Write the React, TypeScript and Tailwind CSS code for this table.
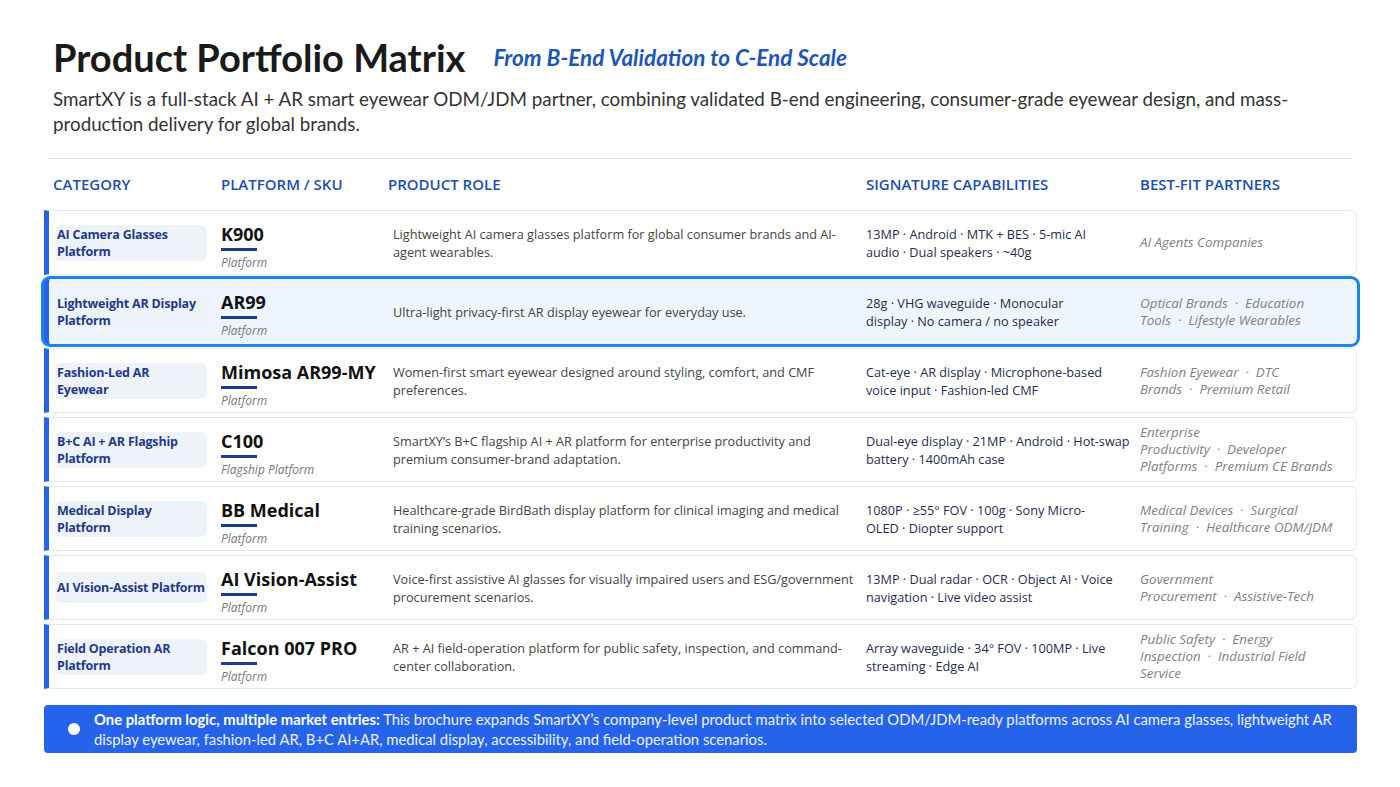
import React from "react";

type Row = {
  cat: string;
  sku: string;
  sub: string;
  role: string;
  caps: string;
  partners: string[];
  active?: boolean;
};

// category + capability cells carry their own line breaks (\n), as laid out in the deck
const ROWS: Row[] = [
  {
    cat: "AI Camera Glasses\nPlatform",
    sku: "K900",
    sub: "Platform",
    role: "Lightweight AI camera glasses platform for global consumer brands and AI-agent wearables.",
    caps: "13MP · Android · MTK + BES · 5-mic AI\naudio · Dual speakers · ~40g",
    partners: ["AI Agents Companies"],
  },
  {
    cat: "Lightweight AR Display\nPlatform",
    sku: "AR99",
    sub: "Platform",
    role: "Ultra-light privacy-first AR display eyewear for everyday use.",
    caps: "28g · VHG waveguide · Monocular\ndisplay · No camera / no speaker",
    partners: ["Optical Brands", "Education Tools", "Lifestyle Wearables"],
    active: true,
  },
  {
    cat: "Fashion-Led AR\nEyewear",
    sku: "Mimosa AR99-MY",
    sub: "Platform",
    role: "Women-first smart eyewear designed around styling, comfort, and CMF preferences.",
    caps: "Cat-eye · AR display · Microphone-based\nvoice input · Fashion-led CMF",
    partners: ["Fashion Eyewear", "DTC Brands", "Premium Retail"],
  },
  {
    cat: "B+C AI + AR Flagship\nPlatform",
    sku: "C100",
    sub: "Flagship Platform",
    role: "SmartXY\u2019s B+C flagship AI + AR platform for enterprise productivity and premium consumer-brand adaptation.",
    caps: "Dual-eye display · 21MP · Android · Hot-swap\nbattery · 1400mAh case",
    partners: ["Enterprise Productivity", "Developer Platforms", "Premium CE Brands"],
  },
  {
    cat: "Medical Display\nPlatform",
    sku: "BB Medical",
    sub: "Platform",
    role: "Healthcare-grade BirdBath display platform for clinical imaging and medical training scenarios.",
    caps: "1080P · \u226555\u00b0 FOV · 100g · Sony Micro-\nOLED · Diopter support",
    partners: ["Medical Devices", "Surgical Training", "Healthcare ODM/JDM"],
  },
  {
    cat: "AI Vision-Assist Platform",
    sku: "AI Vision-Assist",
    sub: "Platform",
    role: "Voice-first assistive AI glasses for visually impaired users and ESG/government procurement scenarios.",
    caps: "13MP · Dual radar · OCR · Object AI · Voice\nnavigation · Live video assist",
    partners: ["Government Procurement", "Assistive-Tech"],
  },
  {
    cat: "Field Operation AR\nPlatform",
    sku: "Falcon 007 PRO",
    sub: "Platform",
    role: "AR + AI field-operation platform for public safety, inspection, and command-center collaboration.",
    caps: "Array waveguide · 34\u00b0 FOV · 100MP · Live\nstreaming · Edge AI",
    partners: ["Public Safety", "Energy Inspection", "Industrial Field Service"],
  },
];

// column tracks for the rows (rows add a 5px bar + 6px pad on the left)
const COLS = "grid grid-cols-[166px_172px_473px_274px_1fr]";

function MatrixRow({ row }: { row: Row }) {
  return (
    <div
      className={`${COLS} h-[65px] items-center rounded-r-md border-l-[5px] border-l-[#2563eb] pl-[6px] ${
        row.active
          ? "bg-[#eef5fd] ring-[3px] ring-[#1a84e8] rounded-md"
          : "border-y border-r border-[#e6e9ef] bg-white"
      }`}
    >
      <div className="pr-[14px]">
        <div className="flex min-h-[31px] items-center whitespace-pre-line rounded-md bg-[#eef2f9] px-[2px] py-[1px] text-[12.5px] font-bold leading-[17px] tracking-[-0.2px] text-[#1e3a8a]">
          {row.cat}
        </div>
      </div>
      <div className="flex flex-col items-start self-start pt-[12px]">
        <div className="text-[18px] font-bold leading-[22px] text-[#111]">{row.sku}</div>
        <div className="mt-[3px] h-[3px] w-[36px] bg-[#1e3a8a]" />
        <div className="mt-[4px] text-[12px] italic leading-[16px] text-[#777]">{row.sub}</div>
      </div>
      <div className="pr-[8px] text-[12.7px] leading-[18px] text-[#444]">{row.role}</div>
      <div className="whitespace-pre-line text-[12.7px] leading-[18px] text-[#1f2d4f]">{row.caps}</div>
      <div className="pr-[14px] text-[13.4px] italic leading-[17px] text-[#808080]">
        {row.partners.join("\u00a0\u00a0\u00b7\u00a0\u00a0")}
      </div>
    </div>
  );
}

export default function App() {
  return (
    <div className="min-h-screen w-[1400px] bg-white pl-[44px] pr-[43px] pt-[32px] font-['Open_Sans',sans-serif]">
      <div className="pl-[9px] font-['Lato',sans-serif]">
        <div className="flex items-center gap-[28px]">
          <h1 className="text-[38px] font-bold leading-[50px] text-[#1a1a1a]">Product Portfolio Matrix</h1>
          <span className="mt-[2px] text-[22.5px] font-bold italic text-[#1e56b8]">
            From B-End Validation to C-End Scale
          </span>
        </div>
        <p className="mt-[4px] pr-[50px] text-[18.8px] leading-[25px] text-[#333]">
          SmartXY is a full-stack AI + AR smart eyewear ODM/JDM partner, combining validated B-end engineering,
          consumer-grade eyewear design, and mass-production delivery for global brands.
        </p>
      </div>

      <div className="mx-[4px] mt-[22px] h-px bg-[#e5e7eb]" />

      <div className="grid h-[51px] grid-cols-[168px_167px_478px_274px_1fr] items-center pl-[9px] text-[15px] font-semibold text-[#1d4fb0]">
        <div>CATEGORY</div>
        <div>PLATFORM / SKU</div>
        <div>PRODUCT ROLE</div>
        <div>SIGNATURE CAPABILITIES</div>
        <div>BEST-FIT PARTNERS</div>
      </div>

      <div className="flex flex-col gap-[4px]">
        {ROWS.map((r) => (
          <MatrixRow key={r.sku} row={r} />
        ))}
      </div>

      <div className="mt-[16px] flex items-center gap-[14px] rounded bg-[#2563eb] py-[4px] pl-[24px] pr-[6px] font-['Lato',sans-serif] text-[14.8px] leading-[20px] text-[#eef3ff]">
        <span className="h-[12px] w-[12px] shrink-0 rounded-full bg-white" />
        <p>
          <b className="text-white">One platform logic, multiple market entries:</b> This brochure expands
          SmartXY&rsquo;s company-level product matrix into selected ODM/JDM-ready platforms across AI camera glasses,
          lightweight AR display eyewear, fashion-led AR, B+C AI+AR, medical display, accessibility, and
          field-operation scenarios.
        </p>
      </div>
    </div>
  );
}
